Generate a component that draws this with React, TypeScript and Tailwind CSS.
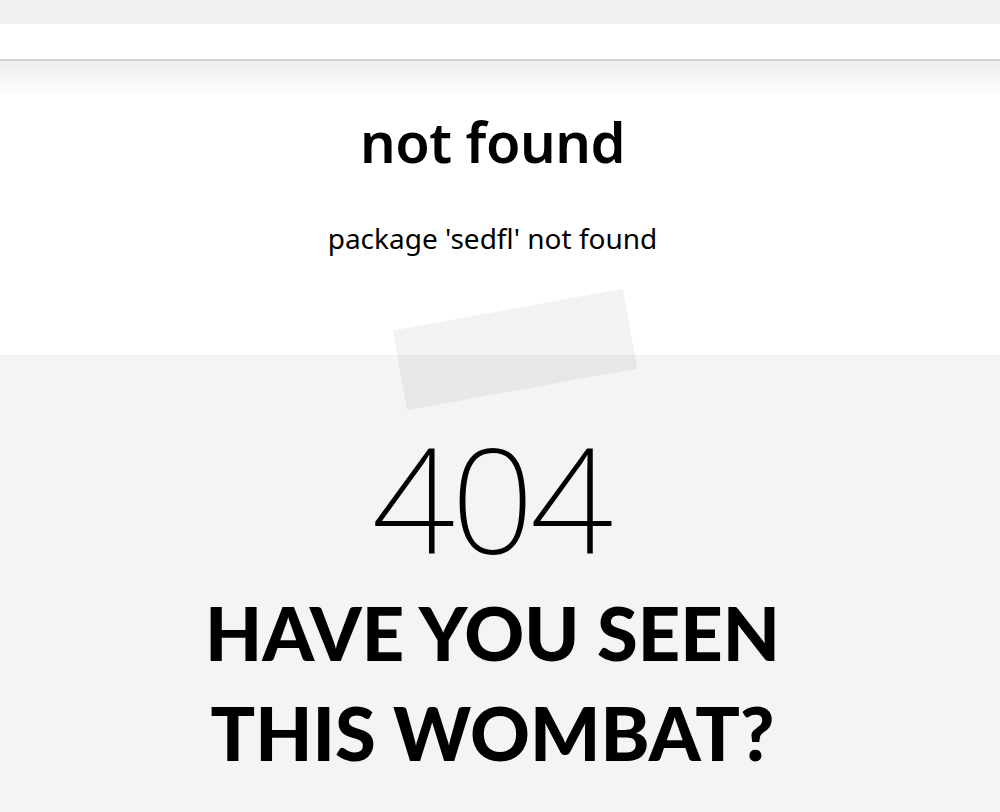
export default function App() {
  return (
    <div className="min-h-screen bg-[#f4f4f4] font-['Noto_Sans',sans-serif] text-black">
      {/* top chrome */}
      <div className="h-6 bg-[#f1f1f1]" />
      <div className="h-[37px] bg-white border-b-2 border-[#d2d2d2]" />

      {/* message */}
      <div className="relative bg-white h-[294px]">
        <div className="h-[36px] bg-gradient-to-b from-[#ededed] to-white" />
        <div className="absolute inset-x-0 top-0 pr-[15px] flex flex-col items-center">
          <h1 className="mt-[40px] text-[56px] leading-[80px] font-semibold tracking-[-0.5px]">not found</h1>
          <p className="mt-[40px] text-[28px] leading-[34px]">package 'sedfl' not found</p>
        </div>
        {/* tape */}
        <div className="absolute left-[398px] top-[248px] w-[234px] h-[81px] -rotate-[10.3deg] bg-black/5" />
      </div>

      {/* 404 */}
      <div className="pr-[15px] flex flex-col items-center">
        <div className="mt-[63px] text-[146px] leading-[160px] font-extralight tracking-[-4px] pr-[4px]">404</div>
        <h2 className="mt-[5px] text-center text-[74px] leading-[100px] font-black uppercase font-['Lato',sans-serif]">
          Have you seen
          <br />
          this wombat?
        </h2>
      </div>
    </div>
  )
}
